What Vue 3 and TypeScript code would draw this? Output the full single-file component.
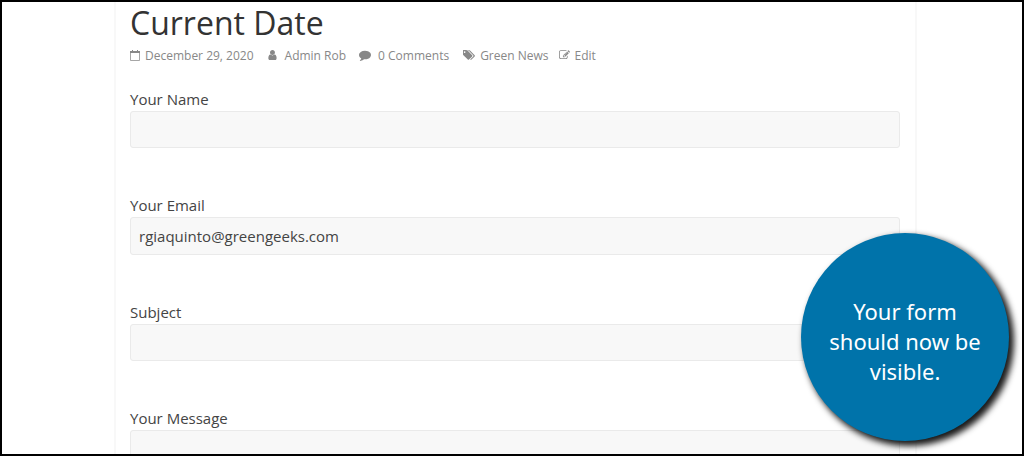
<script setup lang="ts">
import { ref } from 'vue'

interface Field {
  id: string
  label: string
  type: string
  value: string
}

const fields = ref<Field[]>([
  { id: 'your-name', label: 'Your Name', type: 'text', value: '' },
  { id: 'your-email', label: 'Your Email', type: 'email', value: 'rgiaquinto@greengeeks.com' },
  { id: 'your-subject', label: 'Subject', type: 'text', value: '' },
])
const message = ref('')
</script>

<template>
  <div class="frame">
    <article class="post">
      <h1 class="title">Current Date</h1>
      <div class="meta">
        <a href="#" class="date">
          <svg class="icon" viewBox="0 0 10 12" width="10" height="12">
            <path d="M.5 3.5v8h9v-8" fill="none" stroke="currentColor" stroke-opacity=".75" />
            <path d="M0 2h10v2H0zM2 1h1v2H2zM7 1h1v2H7z" fill="currentColor" />
          </svg>
          <span>December 29, 2020</span>
        </a>
        <a href="#" class="author">
          <svg class="icon" viewBox="200 0 1400 1792" width="9" height="12">
            <path fill="currentColor" d="M1536 1399q0 109-62.5 187t-150.5 78h-854q-88 0-150.5-78t-62.5-187q0-85 8.5-160.5t31.5-152 58.5-131 94-89 134.5-34.5q131 128 313 128t313-128q76 0 134.5 34.5t94 89 58.5 131 31.5 152 8.5 160.5zm-256-887q0 159-112.5 271.5t-271.5 112.5-271.5-112.5-112.5-271.5 112.5-271.5 271.5-112.5 271.5 112.5 112.5 271.5z" />
          </svg>
          <span>Admin Rob</span>
        </a>
        <a href="#" class="comments">
          <svg class="icon" viewBox="0 0 1792 1792" width="12" height="12">
            <path fill="currentColor" d="M1792 896q0 174-120 321.5t-326 233-450 85.5q-70 0-145-8-198 175-460 242-49 14-114 22-17 2-30.5-9t-17.5-29v-1q-3-4-.5-12t2-10 4.5-9.5l6-9 7-8.5 8-9q7-8 31-34.5t34.5-38 31-39.5 32.5-51 27-59 26-76q-157-89-247.5-220t-90.5-281q0-130 71-248.5t191-204.5 286-136.5 348-50.5q244 0 450 85.5t326 233 120 321.5z" />
          </svg>
          <span>0 Comments</span>
        </a>
        <a href="#" class="tags">
          <svg class="icon" viewBox="0 0 1850 1792" width="12" height="12">
            <path fill="currentColor" d="M384 448q0-53-37.5-90.5t-90.5-37.5-90.5 37.5-37.5 90.5 37.5 90.5 90.5 37.5 90.5-37.5 37.5-90.5zm1067 576q0 53-37 90l-491 492q-39 37-91 37-53 0-90-37l-715-716q-38-37-64.5-101t-26.5-117v-416q0-52 38-90t90-38h416q53 0 117 26.5t102 64.5l715 714q37 39 37 91zm384 0q0 53-37 90l-491 492q-39 37-91 37-36 0-59-14t-53-45l470-470q37-37 37-90 0-52-37-91l-715-714q-38-38-102-64.5t-117-26.5h224q53 0 117 26.5t102 64.5l715 714q37 39 37 91z" />
          </svg>
          <span>Green News</span>
        </a>
        <a href="#" class="edit">
          <svg class="icon" viewBox="0 0 1792 1792" width="11" height="12">
            <path fill="currentColor" d="M888 1184l116-116-152-152-116 116v56h96v96h56zm440-720q-16-16-33 1l-350 350q-17 17-1 33t33-1l350-350q17-17 1-33zm80 594v190q0 119-84.5 203.5t-203.5 84.5h-832q-119 0-203.5-84.5t-84.5-203.5v-832q0-119 84.5-203.5t203.5-84.5h832q63 0 117 25 15 7 18 23 3 17-9 29l-49 49q-14 14-32 8-23-6-45-6h-832q-66 0-113 47t-47 113v832q0 66 47 113t113 47h832q66 0 113-47t47-113v-126q0-13 9-22l64-64q15-15 35-7t20 29zm-96-738l288 288-672 672h-288v-288zm444 132l-92 92-288-288 92-92q28-28 68-28t68 28l152 152q28 28 28 68t-28 68z" />
          </svg>
          <span>Edit</span>
        </a>
      </div>
      <form class="form" @submit.prevent>
        <div v-for="field in fields" :key="field.id" class="field">
          <label :for="field.id">{{ field.label }}</label>
          <input :id="field.id" v-model="field.value" :type="field.type" />
        </div>
        <div class="field">
          <label for="your-message">Your Message</label>
          <textarea id="your-message" v-model="message" rows="6"></textarea>
        </div>
      </form>
    </article>
    <aside class="callout">Your form should now be visible.</aside>
  </div>
</template>

<style>
body {
  margin: 0;
}
</style>

<style scoped>
.frame {
  position: relative;
  box-sizing: border-box;
  height: 100vh;
  overflow: hidden;
  padding: 0 105px 0 112px;
  border: 2px solid #000;
  background: #fff;
  color: #444;
  font-family: "Open Sans", "Noto Sans", sans-serif;
}

.post {
  padding: 0 15px 0 14px;
  border: solid #f8f8f8;
  border-width: 0 2px;
}

.title {
  margin: 0;
  color: #333;
  font-size: 32px;
  font-weight: 400;
  line-height: 42px;
}

.meta {
  display: flex;
  align-items: center;
  height: 22px;
  font-size: 12px;
}

.meta a {
  display: flex;
  align-items: center;
  gap: 5px;
  margin-right: 14px;
  color: #888;
  text-decoration: none;
  white-space: nowrap;
}

.meta .author {
  gap: 8px;
  margin-right: 13px;
}

.meta .comments {
  gap: 7px;
}

.meta .tags {
  margin-right: 10px;
}

.icon {
  display: block;
  flex: none;
}

.form {
  display: grid;
  gap: 45px;
  margin-top: 21px;
}

.field {
  display: flex;
  flex-direction: column;
}

label {
  align-self: flex-start;
  font-size: 15px;
  line-height: 24px;
}

input,
textarea {
  box-sizing: border-box;
  width: 100%;
  height: 37px;
  margin: 0;
  padding: 0 8px;
  border: 1px solid #eaeaea;
  border-radius: 3px;
  background: #f8f8f8;
  color: #444;
  font: 15px "Open Sans", "Noto Sans", sans-serif;
  outline: none;
}

input[type="email"] {
  height: 38px;
}

textarea {
  height: 150px;
  padding: 8px;
  resize: none;
}

.callout {
  position: absolute;
  right: 13px;
  bottom: 13px;
  display: flex;
  align-items: center;
  box-sizing: border-box;
  width: 208px;
  height: 208px;
  padding: 8px 24px 0;
  border-radius: 50%;
  background: #0073aa;
  box-shadow: 4px 4px 6px 1px rgba(0, 0, 0, 0.9);
  color: #fff;
  font-family: "Noto Sans", "Open Sans", sans-serif;
  font-size: 22px;
  line-height: 30px;
  text-align: center;
}
</style>
